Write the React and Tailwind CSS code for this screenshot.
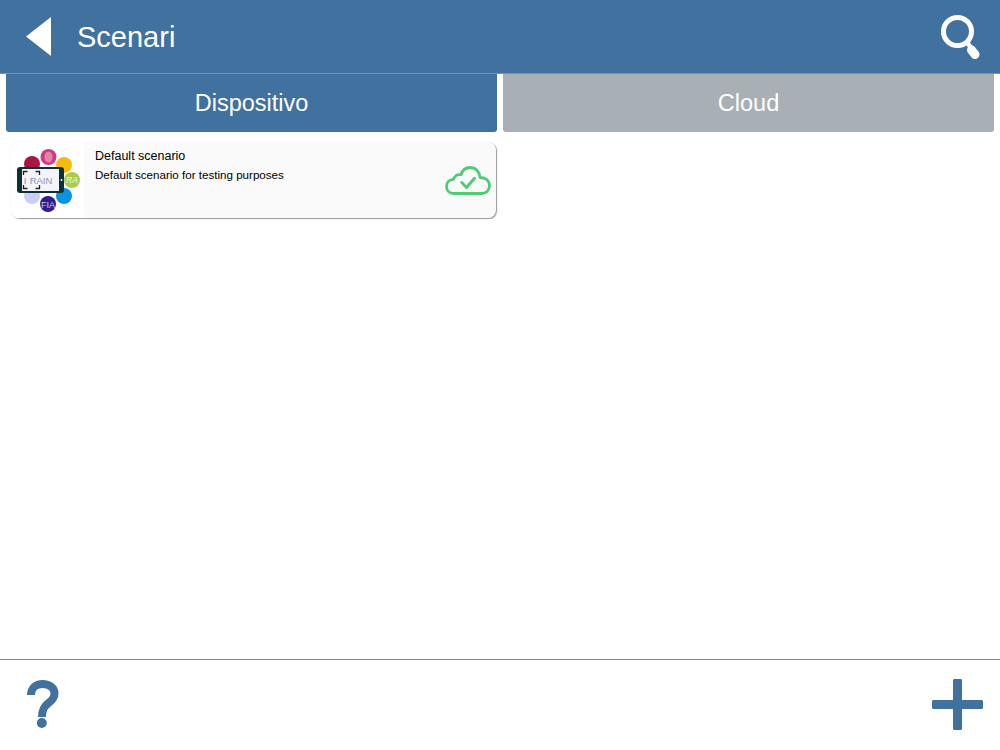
import React from 'react';

const BLUE = '#41719f';

const ScenarioLogo = () => (
  <svg width="73" height="75" viewBox="0 0 73 75" className="block">
    <circle cx="37.500" cy="15" r="8" fill="#cf3a80" />
    <ellipse cx="37.500" cy="15" rx="4" ry="5.500" fill="#df85a8" />
    <circle cx="21" cy="22" r="8" fill="#a91640" />
    <circle cx="53" cy="23" r="8" fill="#f6bc0c" />
    <circle cx="61" cy="38" r="8" fill="#a9cf4a" />
    <text x="61" y="41" textAnchor="middle" fontSize="8.500" fontStyle="italic" fill="#f4f8e8" fontFamily="'Liberation Sans', sans-serif">RA</text>
    <circle cx="53" cy="54" r="8" fill="#0a93e0" />
    <circle cx="21" cy="54" r="8" fill="#cccdf8" />
    <circle cx="37" cy="62" r="8" fill="#2c1f8c" />
    <text x="37" y="65.500" textAnchor="middle" fontSize="9" fill="#c9c6ee" fontFamily="'Liberation Sans', sans-serif">FIA</text>
    <rect x="6" y="25" width="47" height="26" rx="3" fill="#0f2f38" />
    <rect x="11" y="27" width="37" height="22" fill="#f4f3f8" />
    <circle cx="50.500" cy="38" r="1" fill="#ffffff" />
    <text x="30" y="41.500" textAnchor="middle" fontSize="9.500" fill="#8f8ec4" fontFamily="'Liberation Sans', sans-serif">RAIN</text>
    <text x="14" y="41.500" textAnchor="middle" fontSize="9.500" fill="#8f8ec4" fontFamily="'Liberation Sans', sans-serif">I</text>
    <path d="M12.500 33v-3.500h4M24.500 29.500h4v3.500M12.500 43v3.500h4M24.500 46.500h4v-3.500" fill="none" stroke="#222222" strokeWidth="1.300" />
  </svg>
);

const CloudCheck = () => (
  <svg width="46" height="30" viewBox="0 0 46 30" fill="none" stroke="#4fcb73" strokeWidth="2.800" strokeLinecap="round" strokeLinejoin="round" className="block">
    <path d="M9 27.500C4.500 27.500 1.500 24.500 1.500 20.500C1.500 16.500 4.300 13.500 8.500 13.300C9.500 9.800 12.500 8 16 8.700C17.500 4 21 1.500 25 1.500C30.500 1.500 34.500 5.500 35 11.500C41 11.300 44.500 15 44.500 19.800C44.500 24.500 41 27.500 36.500 27.500Z" />
    <path d="M16.800 16.500L21.500 21.500L29.500 12.300" strokeWidth="3" />
  </svg>
);

const App = () => {
  return (
    <div className="w-[1000px] h-[750px] bg-white flex flex-col overflow-hidden font-['Liberation_Sans',Arial,sans-serif]">
      <header className="h-[74px] shrink-0 bg-[#41719f] border-b border-[#6f94b8] flex items-center justify-between pl-[26px] pr-[20px]">
        <div className="flex items-center gap-[26px]">
          <svg width="25" height="39" viewBox="0 0 25 39" className="block">
            <path d="M25 0V39L0 19.500Z" fill="#ffffff" />
          </svg>
          <h1 className="text-[29px] leading-none text-white font-normal mt-[1px]">Scenari</h1>
        </div>
        <svg width="40" height="44" viewBox="0 0 40 44" fill="none" stroke="#ffffff" className="block">
          <circle cx="17.500" cy="16.500" r="14" strokeWidth="5" />
          <path d="M27 27L31 33" strokeWidth="4.500" />
          <path d="M31.500 35L35 39.500" strokeWidth="9" strokeLinecap="round" />
        </svg>
      </header>

      <div className="flex gap-[6px] px-[6px] h-[58px] shrink-0">
        <button className="flex-1 rounded-b-[3px] bg-[#41719f] text-white text-[23.500px] pt-[2px]">Dispositivo</button>
        <button className="flex-1 rounded-b-[3px] bg-[#a8afb5] text-white text-[23.500px] pt-[2px]">Cloud</button>
      </div>

      <main className="flex-1 pl-[11px] pt-[10px]">
        <div className="w-[485px] h-[76px] flex rounded-[8px] bg-[#fafafa] shadow-[1px_1px_1px_0_#9a9a9a,0_0_1px_0_#d8d8d8]">
          <div className="w-[73px] h-[76px] bg-white rounded-l-[8px] shrink-0">
            <ScenarioLogo />
          </div>
          <div className="flex-1 pl-[11px] pt-[6px] text-black">
            <div className="text-[12.500px] leading-[15px] mt-[1px]">Default scenario</div>
            <div className="text-[11.600px] leading-[15px] mt-[3px]">Default scenario for testing purposes</div>
          </div>
          <div className="pr-[5px] pt-[24px]">
            <CloudCheck />
          </div>
        </div>
      </main>

      <footer className="h-[91px] shrink-0 border-t border-[#7d8b99] flex items-center justify-between pl-[26px] pr-[17px]">
        <svg width="33" height="48" viewBox="0 0 33 48" fill="none" className="block -mt-[2px]">
          <path d="M5 15C5 8 10 4 16.500 4C23.500 4 28.500 8 28.500 13.500C28.500 18 26 20.500 22.500 23C18.500 26 16 29 16 37" stroke={BLUE} strokeWidth="8" />
          <circle cx="15.800" cy="43" r="5" fill={BLUE} />
        </svg>
        <svg width="51" height="51" viewBox="0 0 51 51" className="block -mt-[2px]">
          <path d="M21 1.500A1.500 1.500 0 0 1 22 0H29A1.500 1.500 0 0 1 30 1.500V21H49.500A1.500 1.500 0 0 1 51 22V29A1.500 1.500 0 0 1 49.500 30H30V49.500A1.500 1.500 0 0 1 29 51H22A1.500 1.500 0 0 1 21 49.500V30H1.500A1.500 1.500 0 0 1 0 29V22A1.500 1.500 0 0 1 1.500 21H21Z" fill={BLUE} />
        </svg>
      </footer>
    </div>
  );
};

export default App;
